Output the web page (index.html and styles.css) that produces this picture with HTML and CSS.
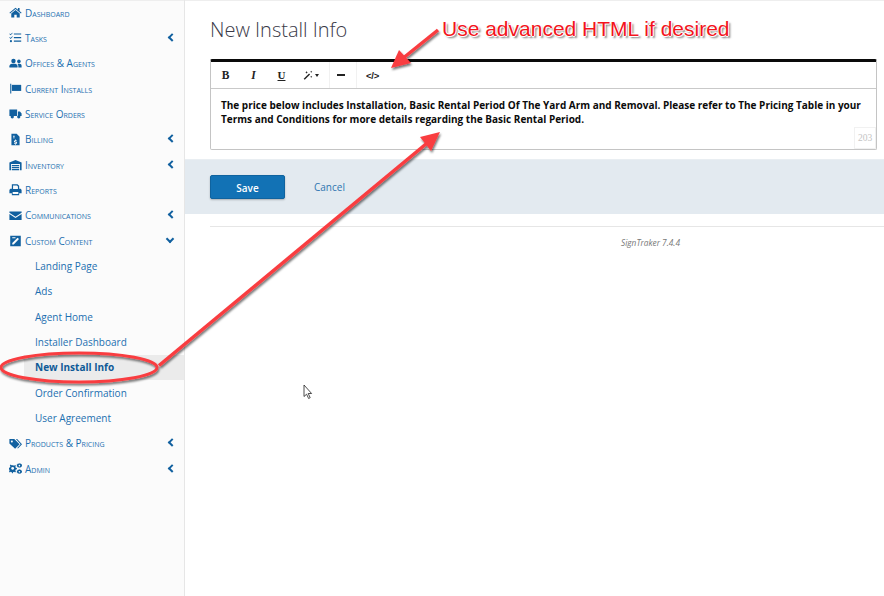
FILE: index.html
```html
<!DOCTYPE html>
<html lang="en">
<head>
<meta charset="utf-8">
<title>New Install Info</title>
<link rel="stylesheet" href="styles.css">
</head>
<body>
<div class="app">
  <nav class="sidebar">
    <a class="item"><svg class="ico" viewBox="0 0 16 16"><path d="M8 2 0.500 8.200l.8 1L8 3.800l6.700 5.400.8-1L13 6.200V2.500h-2v2z"/><path d="M8 5 2.800 9.200V14h3.700v-3.200h3V14h3.700V9.200z"/></svg><span>Dashboard</span></a>
    <a class="item"><svg class="ico" viewBox="0 0 16 16"><path d="M6 3h9v1.400H6zM6 7.400h9v1.400H6zM6 11.800h9v1.400H6z"/><path d="M1 3l1 1 2-2 .6.600L2 5.200.4 3.600zM1 7.500l1 1 2-2 .6.600L2 9.700.4 8.100z"/><circle cx="2.400" cy="12.500" r="1.300"/></svg><span>Tasks</span><i class="chev left"></i></a>
    <a class="item"><svg class="ico" viewBox="0 0 16 16"><circle cx="5.500" cy="5" r="2.700"/><circle cx="12.200" cy="5.400" r="2.200"/><path d="M0.500 13v-1.600C0.500 9.500 2 8.400 3.600 8.400h3.800c1.600 0 3.100 1.100 3.100 3V13z"/><path d="M11.500 13v-1.800c0-1-.4-1.800-1-2.400.4-.3 1-.4 1.500-.4h1c1.500 0 2.500 1 2.500 2.500V13z"/></svg><span>Offices &amp; Agents</span></a>
    <a class="item"><svg class="ico" viewBox="0 0 16 16"><path d="M1.500 2h1.300v12H1.500z"/><path d="M3.500 3.500H15v7.500H3.500z"/></svg><span>Current Installs</span></a>
    <a class="item"><svg class="ico" viewBox="0 0 16 16"><path d="M0.500 3H10v8H0.500zM11 5.500h2.500L15.500 8v3H11z"/><circle cx="4" cy="12" r="2"/><circle cx="12" cy="12" r="2"/></svg><span>Service Orders</span></a>
    <a class="item"><svg class="ico" viewBox="0 0 16 16"><path fill-rule="evenodd" d="M3 1h6.500L13 4.500V15H3zM5 3.500v1h2v-1zM5 5.500v1h2v-1zM7.500 8v1c-1 .2-1.500.8-1.500 1.500 0 1.700 2.500 1 2.500 1.700 0 .5-1.500.3-2.200 0v1c.4.200.8.300 1.200.300v1h1v-1c1-.2 1.500-.8 1.500-1.500 0-1.700-2.500-1.100-2.500-1.700 0-.4 1.200-.4 2-.1v-1c-.3-.1-.6-.2-1-.2V8z"/></svg><span>Billing</span><i class="chev left"></i></a>
    <a class="item"><svg class="ico" viewBox="0 0 16 16"><path fill-rule="evenodd" d="M0.500 15V5.500L8 2.500l7.500 3V15h-2V7.500h-11V15z"/><path d="M3.500 8.500h9v1.500h-9zM3.500 11h9v1.500h-9zM3.500 13.500h9V15h-9z"/></svg><span>Inventory</span><i class="chev left"></i></a>
    <a class="item"><svg class="ico" viewBox="0 0 16 16"><path fill-rule="evenodd" d="M3.500 1.500h7l2 2V7h1c1 0 2 .8 2 2v3.500h-3V15h-9v-2.500h-3V9c0-1.200 1-2 2-2h1zM5 3v4.500h6V4.200L9.800 3zM4.500 11v2.500h7V11z"/></svg><span>Reports</span></a>
    <a class="item"><svg class="ico" viewBox="0 0 16 16"><path d="M0.500 3.200h15v1.300L8 9.500 0.500 4.500z"/><path d="M0.500 6.200 8 11.200l7.500-5V13.500h-15z"/></svg><span>Communications</span><i class="chev left"></i></a>
    <a class="item"><svg class="ico" viewBox="0 0 16 16"><path fill-rule="evenodd" d="M1.500 2h13v13h-13zM10.500 4.500 4 11v1.800h1.800l6.500-6.500zM4 4h4v1.200H4z"/></svg><span>Custom Content</span><i class="chev down"></i></a>
    <a class="sub">Landing Page</a>
    <a class="sub">Ads</a>
    <a class="sub">Agent Home</a>
    <a class="sub">Installer Dashboard</a>
    <a class="sub active">New Install Info</a>
    <a class="sub">Order Confirmation</a>
    <a class="sub">User Agreement</a>
    <a class="item"><svg class="ico" viewBox="0 0 16 16"><path fill-rule="evenodd" d="M0.500 2.500h6L13 9l-5.500 5.500L0.500 8zM3.500 4.200a1.200 1.200 0 1 0 .01 0z"/><path d="M8.500 2.500h1.500L16 9l-5 5.200-.8-.8L14.300 9z"/></svg><span>Products &amp; Pricing</span><i class="chev left"></i></a>
    <a class="item"><svg class="ico" viewBox="0 0 16 16"><path fill-rule="evenodd" d="M5 4l1.300.5 1.200-.8 1 1-.7 1.200.5 1.300 1.400.3v1.500l-1.400.3-.5 1.300.7 1.200-1 1-1.200-.8-1.300.5-.3 1.400H3.700l-.3-1.400-1.300-.5-1.100.8-1-1 .7-1.200-.5-1.300L0 8.500V7l1.200-.3.500-1.300-.7-1.200 1-1 1.100.8L4 4zM4.500 6a1.800 1.800 0 1 0 .01 0z"/><path fill-rule="evenodd" d="M12.800 1.500l.8.600 1-.2.500 1 .9.300-.1 1.100.1 1-.9.400-.5 1-1-.2-.8.600-.8-.6-1 .2-.5-1-.9-.4.100-1-.1-1.100.9-.3.500-1 1 .2zM12.800 3.500a.9.900 0 1 0 .01 0z"/><path fill-rule="evenodd" d="M12.800 9l.8.600 1-.2.500 1 .9.300-.1 1.100.1 1-.9.400-.5 1-1-.2-.8.600-.8-.6-1 .2-.5-1-.9-.4.100-1-.1-1.100.9-.3.500-1 1 .2zM12.800 11a.9.900 0 1 0 .01 0z"/></svg><span>Admin</span><i class="chev left"></i></a>
  </nav>
  <main class="content">
    <h1 class="title">New Install Info</h1>
    <section class="editor">
      <div class="toolbar">
        <div class="tool-group first">
          <b class="tool serif">B</b>
          <i class="tool serif">I</i>
          <u class="tool under">U</u>
          <span class="tool magic"><svg class="wand" viewBox="0 0 14 14"><path d="M1 12.300 8.500 4.800l1.400 1.400-7.500 7.500z"/><path d="M5 1.500l.6 1.300 1.300.6-1.300.6L5 5.300l-.6-1.300-1.300-.6 1.300-.6zM11.500 1l.5 1 1 .5-1 .5-.5 1-.5-1-1-.5 1-.5zM11.500 8l.5 1 1 .5-1 .5-.5 1-.5-1-1-.5 1-.5z"/></svg><i class="caret"></i></span>
        </div>
        <div class="tool-group second"><span class="tool"><i class="dash"></i></span></div>
        <div class="tool-group third"><span class="tool code">&lt;/&gt;</span></div>
      </div>
      <div class="body">
        <p class="copy">The price below includes Installation, Basic Rental Period Of The Yard Arm and Removal. Please refer to The Pricing Table in your Terms and Conditions for more details regarding the Basic Rental Period.</p>
        <span class="count">203</span>
      </div>
    </section>
    <div class="actions">
      <button class="save" type="button">Save</button>
      <a class="cancel">Cancel</a>
    </div>
    <footer class="foot">SignTraker 7.4.4</footer>
  </main>
</div>
<svg class="marks" viewBox="0 0 884 596">
  <defs>
    <filter id="sh" x="-10%" y="-10%" width="120%" height="120%"><feDropShadow dx="1" dy="2" stdDeviation="1.200" flood-color="#000" flood-opacity=".55"/></filter>
  </defs>
  <g filter="url(#sh)" fill="#f93c40" stroke="none">
    <ellipse cx="79" cy="367.500" rx="78" ry="14.500" fill="none" stroke="#f93c40" stroke-width="3"/>
    <path d="M159 365.500 429 141.500" fill="none" stroke="#f93c40" stroke-width="3.500"/>
    <path d="M440 132 431 151 420 137z"/>
    <path d="M438 30 402 59" fill="none" stroke="#f93c40" stroke-width="3.500"/>
    <path d="M391 68 399 50 411 63z"/>
  </g>
  <path class="cursor" d="M304 385v11.500l2.600-2.300 2 4.300 1.600-.8-2-4.200h3.400z"/>
</svg>
<p class="note">Use advanced HTML if desired</p>
</body>
</html>
```
FILE: styles.css
```css
* { box-sizing: border-box; }
html, body { margin: 0; height: 596px; overflow: hidden; background: #fff; }
body { font-family: "Open Sans", "Liberation Sans", sans-serif; position: relative; }
.app { display: flex; height: 596px; }

.sidebar { width: 185px; flex: none; background: #fbfbfb; border-right: 1px solid #e6e6e6; box-shadow: inset 0 1px 0 #eeeeee; }
.item, .sub { display: flex; align-items: center; height: 25.33px; color: #1b6fb0; }
.item { padding-left: 9px; font-size: 10px; font-variant: small-caps; position: relative; }
.item span { margin-left: 3px; }
.ico { width: 13px; height: 13px; fill: #11609f; flex: none; }
.sub { padding-left: 35px; font-size: 10px; }
.sub.active { font-weight: 700; color: #0f5a97; background: #ebebeb; margin-left: 24px; padding-left: 11px; }
.chev { position: absolute; right: 9px; top: 50%; width: 6px; height: 6px; border-left: 2px solid #11609f; border-bottom: 2px solid #11609f; }
.chev.left { transform: translate(0, -60%) rotate(45deg); }
.chev.down { transform: translate(0, -85%) rotate(-45deg); right: 11px; }

.content { flex: 1; min-width: 0; display: flex; flex-direction: column; box-shadow: inset 0 1px 0 #eeeeee; }
.title { margin: 15px 0 0 25px; height: 29px; font-size: 20px; font-weight: 300; line-height: 29px; color: #3a3a48; }
.editor { margin: 15px 7px 0 25px; border: 1px solid #c4c4c4; border-top: 3px solid #0a0a0a; border-radius: 2px; height: 91px; display: flex; flex-direction: column; }
.toolbar { display: flex; height: 27px; border-bottom: 1px solid #c9c9c9; flex: none; }
.tool-group { display: flex; align-items: center; border-right: 1px solid #f1f1f1; }
.tool-group.first { padding: 0 9px 0 7px; }
.tool-group.second { padding: 0 3px 0 3px; }
.tool-group.third { padding: 0 0 0 8px; border-right: 0; }
.tool { display: flex; align-items: center; justify-content: center; width: 15px; height: 18px; margin: 0 5px 0 0; color: #222; font-size: 11px; font-style: normal; text-decoration: none; }
.tool-group .tool + .tool { margin-left: 8px; }
.tool.serif { font-family: "Liberation Serif", serif; font-weight: 700; font-size: 11.5px; }
i.tool.serif { font-style: italic; }
.tool.under { font-family: "Liberation Serif", serif; font-weight: 700; font-size: 11px; text-decoration: underline; }
.tool.magic { width: 18px; gap: 2px; margin-right: 0; }
.wand { width: 10px; height: 10px; fill: #222; flex: none; }
.caret { border: 2.500px solid transparent; border-top: 3px solid #222; margin-top: 3px; }
.dash { width: 8px; height: 2px; background: #222; }
.tool.code { font-family: "Liberation Sans", sans-serif; font-weight: 700; font-size: 9.500px; letter-spacing: -.3px; margin-right: 0; }
.body { position: relative; flex: 1; padding: 8.500px 10px 0 10px; }
.copy { margin: 0; font-size: 10px; font-weight: 700; line-height: 14.500px; color: #0b0b0b; }
.count { position: absolute; right: 0; bottom: 0; width: 22px; height: 22px; border: 1px solid #f1f1f1; background: #fff; font-family: "Liberation Serif", serif; font-size: 9.500px; line-height: 20px; text-align: center; color: #c4c4c4; }

.actions { margin-top: 9px; height: 55px; background: #e3eaf0; display: flex; align-items: center; padding-left: 25px; border-top: 1px solid #e9eef2; }
.save { width: 75px; height: 24px; border: 1px solid #0f639f; border-radius: 2px; background: #1272b5; color: #fff; font: 600 10px "Open Sans", sans-serif; box-shadow: 0 1px 2px rgba(0,0,0,.25); padding: 1px 0 0; }
.cancel { margin-left: 29px; font-size: 10px; color: #2f75b1; }
.foot { margin: 12px 0 0 25px; border-top: 1px solid #e6e6e6; padding: 10px 204px 0 0; text-align: right; font-size: 8.300px; font-style: italic; color: #777; }

.marks { position: absolute; left: 0; top: 0; width: 884px; height: 596px; pointer-events: none; }
.cursor { fill: #fff; stroke: #222; stroke-width: .8; }
.note { position: absolute; left: 442px; top: 15px; margin: 0; font-family: "Liberation Sans", Arial, sans-serif; font-size: 21px; line-height: 27px; white-space: nowrap; color: #f3141c; text-shadow: -1px 0 0 #fff, 1px 0 0 #fff, 0 -1px 0 #fff, 0 1px 0 #fff, 2px 2px 2px rgba(0,0,0,.55); }
```
